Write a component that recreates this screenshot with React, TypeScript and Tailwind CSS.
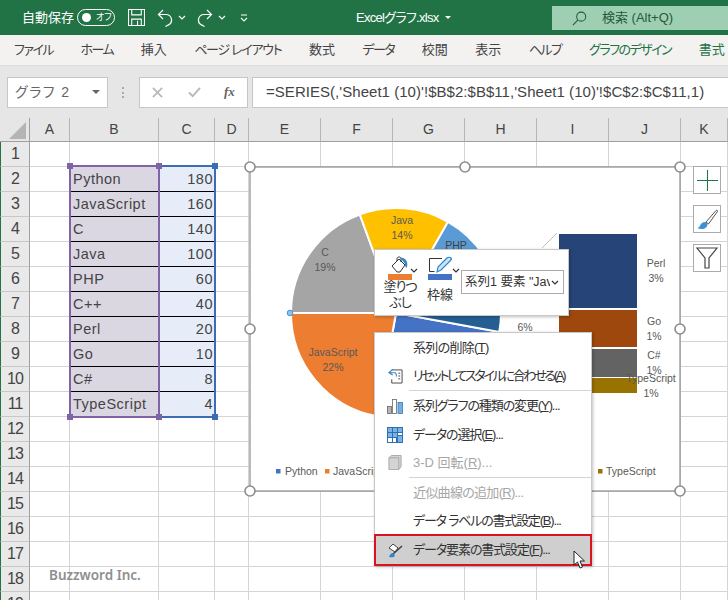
const uiFont = "font-['Liberation_Sans','Noto_Sans_CJK_JP',sans-serif]";

const tabs = [
  { label: "ファイル", cls: "text-[#444] tracking-[-1.5px]" },
  { label: "ホーム", cls: "text-[#444] tracking-[-1.5px]" },
  { label: "挿入", cls: "text-[#444]" },
  { label: "ページ レイアウト", cls: "text-[#444] tracking-[-1.3px]" },
  { label: "数式", cls: "text-[#444]" },
  { label: "データ", cls: "text-[#444] tracking-[-1.5px]" },
  { label: "校閲", cls: "text-[#444]" },
  { label: "表示", cls: "text-[#444]" },
  { label: "ヘルプ", cls: "text-[#444] tracking-[-1.5px]" },
  { label: "グラフのデザイン", cls: "text-[#217346] tracking-[-1.5px]" },
  { label: "書式", cls: "text-[#217346]" },
];

const gridCols = "grid-cols-[30px_40px_89px_56px_34px_72px_72px_72px_72px_72px_72px_47px]";
const columns = ["A", "B", "C", "D", "E", "F", "G", "H", "I", "J", "K"];

const data: [string, number][] = [
  ["Python", 180],
  ["JavaScript", 160],
  ["C", 140],
  ["Java", 100],
  ["PHP", 60],
  ["C++", 40],
  ["Perl", 20],
  ["Go", 10],
  ["C#", 8],
  ["TypeScript", 4],
];

const cx = 396;
const cy = 313;
const r = 105;

const slices = [
  { from: 100.4, to: 190.2, fill: "#4472c4" },
  { from: 190.2, to: 270, fill: "#ed7d31" },
  { from: 270, to: 339.8, fill: "#a5a5a5" },
  { from: 339.8, to: 389.7, fill: "#ffc000" },
  { from: 389.7, to: 419.6, fill: "#5b9bd5" },
  { from: 419.6, to: 439.5, fill: "#70ad47" },
  { from: 439.5, to: 460.4, fill: "#255e91" },
];

const slicePath = (from: number, to: number) => {
  const a = (from * Math.PI) / 180;
  const b = (to * Math.PI) / 180;
  const x1 = cx + r * Math.sin(a);
  const y1 = cy - r * Math.cos(a);
  const x2 = cx + r * Math.sin(b);
  const y2 = cy - r * Math.cos(b);
  return `M${cx} ${cy}L${x1} ${y1}A${r} ${r} 0 ${to - from > 180 ? 1 : 0} 1 ${x2} ${y2}Z`;
};

const labels: [string | null, string, number, number][] = [
  ["Java", "14%", 402, 224],
  ["C", "19%", 325, 256],
  ["JavaScript", "22%", 333, 356],
  ["Perl", "3%", 656, 267],
  ["Go", "1%", 654, 325],
  ["C#", "1%", 654, 359],
  ["TypeScript", "1%", 651, 382],
  [null, "6%", 525, 331],
];

const handles: [number, number][] = [
  [250, 167],
  [465, 167],
  [680, 167],
  [250, 329],
  [680, 329],
  [250, 491],
  [465, 491],
  [680, 491],
];

const Chevron = ({ className = "" }: { className?: string }) => (
  <svg viewBox="0 0 8 5" className={`w-[8px] h-[5px] ${className}`} fill="none" stroke="currentColor" strokeWidth="1.2">
    <path d="M1 1l3 3 3-3" />
  </svg>
);

const TitleBar = () => (
  <div className="h-[35px] bg-[#217346] flex items-center text-white relative">
    <span className="ml-[22px] text-[13px] w-[49px] whitespace-nowrap [font-feature-settings:'palt']">自動保存</span>
    <div className="ml-[6px] w-[38px] h-[17px] rounded-full border border-white flex items-center pl-[4px] gap-[5px]">
      <span className="w-[9px] h-[9px] rounded-full bg-white" />
      <span className="text-[9px] leading-none [font-feature-settings:'palt']">オフ</span>
    </div>
    <svg viewBox="0 0 16 16" className="ml-[13px] w-[17px] h-[17px]" fill="none" stroke="white" strokeWidth="1">
      <path d="M.5.5h15v15H.5zM3.500.5v5h9v-5M3.500 15.500v-6h9v6M9 11v4" />
    </svg>
    <svg viewBox="0 0 16 18" className="ml-[12px] w-[16px] h-[18px]" fill="none" stroke="white" strokeWidth="1.2">
      <path d="M6 1L1.500 5.500 6 10M1.500 5.500H9a5.500 5.500 0 0 1 2.500 10.400l-3 1.600" />
    </svg>
    <Chevron className="ml-[5px]" />
    <svg viewBox="0 0 16 18" className="ml-[11px] w-[16px] h-[18px]" fill="none" stroke="white" strokeWidth="1.2">
      <path d="M10 1l4.500 4.500L10 10M14.500 5.500H7a5.500 5.500 0 0 0-2.500 10.400l3 1.600" />
    </svg>
    <Chevron className="ml-[5px]" />
    <svg viewBox="0 0 8 8" className="ml-[14px] w-[8px] h-[8px]" fill="none" stroke="white" strokeWidth="1.1">
      <path d="M1 1h6M1 4l3 3 3-3" />
    </svg>
    <div className="ml-[108px] w-[89px] text-[13px] tracking-[-0.7px] whitespace-nowrap [font-feature-settings:'palt']">
      Excelグラフ.xlsx
    </div>
    <span className="w-0 h-0 border-x-[3px] border-x-transparent border-t-[3px] border-t-white" />
    <div className="ml-auto w-[176px] h-[24px] mt-[1px] bg-[#9fcfb2] flex items-center text-[#1e5c3a]">
      <svg viewBox="0 0 16 16" className="ml-[20px] w-[15px] h-[15px]" fill="none" stroke="#1e5c3a" strokeWidth="1.1">
        <circle cx="9.800" cy="6" r="4.800" />
        <path d="M6.300 9.500L1 15" />
      </svg>
      <span className="ml-[15px] text-[13px] whitespace-nowrap">検索 (Alt+Q)</span>
    </div>
  </div>
);

const TabBar = () => (
  <div className="h-[30px] bg-[#f3f2f1] flex items-center pl-[14px] gap-[27.5px] text-[13px] whitespace-nowrap [font-feature-settings:'palt']">
    {tabs.map((t) => (
      <span key={t.label} className={t.cls}>
        {t.label}
      </span>
    ))}
  </div>
);

const FormulaBar = () => (
  <div className="h-[53px] bg-[#e6e6e6] flex items-center pl-[7px] border-t border-[#dcdcdc]">
    <div className="w-[101px] h-[31px] bg-white border border-[#c6c6c6] flex items-center pl-[7px] pr-[7px] text-[14px] text-[#666] [font-feature-settings:'palt']">
      <span className="tracking-[1.5px]">グラフ 2</span>
      <span className="ml-auto w-0 h-0 border-x-[4px] border-x-transparent border-t-[4px] border-t-[#666]" />
    </div>
    <span className="ml-[14px] w-[2px] h-[11px] border-l-2 border-dotted border-[#aaa]" />
    <div className="ml-[15px] w-[109px] h-[31px] bg-white border border-[#c6c6c6] flex items-center relative text-[#b8b8b8]">
      <svg viewBox="0 0 12 12" className="ml-[12px] w-[11px] h-[11px]" fill="none" stroke="currentColor" strokeWidth="1.8">
        <path d="M1 1l10 10M11 1L1 11" />
      </svg>
      <svg viewBox="0 0 14 12" className="ml-[25px] w-[13px] h-[11px]" fill="none" stroke="currentColor" strokeWidth="2">
        <path d="M1 6l4 4 8-9" />
      </svg>
      <span className="ml-[23px] text-[13px] italic font-bold text-[#666] font-['Liberation_Serif',serif]">fx</span>
    </div>
    <div className="ml-[4px] flex-1 h-[31px] bg-white border-y border-l border-[#c6c6c6] flex items-center pl-[13px] text-[15px] tracking-[0.04px] text-[#444] whitespace-nowrap overflow-hidden">
      =SERIES(,'Sheet1 (10)'!$B$2:$B$11,'Sheet1 (10)'!$C$2:$C$11,1)
    </div>
  </div>
);

const Sheet = () => {
  const rows = Array.from({ length: 19 }, (_, i) => i + 1);
  return (
    <div className={`grid ${gridCols} grid-rows-[24px] auto-rows-[25px] bg-white text-[#444]`}>
      <div className="bg-[#e6e6e6] border-r border-b border-[#9f9f9f] relative">
        <span className="absolute right-[3px] bottom-[2px] w-0 h-0 border-l-[17px] border-l-transparent border-b-[17px] border-b-[#b4b4b4]" />
      </div>
      {columns.map((c) => (
        <div key={c} className="bg-[#e6e6e6] border-r border-b border-r-[#b5b5b5] border-b-[#9f9f9f] flex items-center justify-center text-[14px]">
          {c}
        </div>
      ))}
      {rows.map((n) => {
        const d = data[n - 2];
        return (
          <div key={n} className="contents">
            <div className="bg-[#e9e9e9] border-r border-b border-r-[#9f9f9f] border-b-[#c8c8c8] border-l border-l-[#217346] flex items-center justify-center text-[16px] tracking-[-1px]">
              {n}
            </div>
            <div className="border-r border-b border-[#d4d4d4]" />
            {d ? (
              <>
                <div className="bg-[#dbd7e2] border-b border-b-black flex items-center pl-[3px] pt-[2px] text-[14.5px] tracking-[0.5px] whitespace-nowrap">
                  {d[0]}
                </div>
                <div className="bg-[#e6edf8] border-b border-b-black flex items-center justify-end pr-[2px] pt-[2px] text-[14.5px] tracking-[0.5px]">
                  {d[1]}
                </div>
              </>
            ) : (
              <>
                <div className="border-r border-b border-[#d4d4d4]" />
                <div className="border-r border-b border-[#d4d4d4]" />
              </>
            )}
            {columns.slice(3).map((c) => (
              <div key={c} className="border-r border-b border-[#d4d4d4]" />
            ))}
          </div>
        );
      })}
    </div>
  );
};

const Selection = () => (
  <>
    <div className="absolute left-[69px] top-[165px] w-[91px] h-[253px] border-2 border-[#8062a6]" />
    <div className="absolute left-[159px] top-[165px] w-[57px] h-[253px] border-y-2 border-r-2 border-[#3b6cb4]" />
    {[69.5, 158.5].flatMap((x) =>
      [166, 416.5].map((y) => (
        <span
          key={`${x}-${y}`}
          className="absolute w-[6px] h-[6px] -ml-[3px] -mt-[3px] bg-[#8062a6]"
          style={{ left: x, top: y }}
        />
      ))
    )}
    {[166, 416.5].map((y) => (
      <span
        key={y}
        className="absolute w-[6px] h-[6px] -ml-[3px] -mt-[3px] bg-[#3b6cb4]"
        style={{ left: 214.5, top: y }}
      />
    ))}
  </>
);

const Chart = () => (
  <svg
    viewBox="240 157 451 345"
    className="absolute left-[240px] top-[157px] w-[451px] h-[345px] font-['Liberation_Sans',sans-serif]"
  >
    <rect x="250" y="167" width="430" height="324" fill="white" stroke="#8c8c8c" strokeWidth="1.2" />
    {slices.map((s) => (
      <path key={s.from} d={slicePath(s.from, s.to)} fill={s.fill} stroke="white" strokeWidth="2" />
    ))}
    <path d="M542 248L557 233" stroke="#bfbfbf" />
    <rect x="559" y="234" width="78" height="74" fill="#264478" />
    <rect x="559" y="310" width="78" height="37" fill="#9e480e" />
    <rect x="559" y="349" width="78" height="28" fill="#636363" />
    <rect x="559" y="378" width="78" height="15" fill="#997300" />
    <text x="456" y="249" textAnchor="middle" fontSize="10.5" fill="#404040">PHP</text>
    {labels.map(([name, pct, x, y]) => (
      <g key={pct + x} fontSize="10.5" fill="#595959" textAnchor="middle">
        {name && <text x={x} y={y}>{name}</text>}
        <text x={x} y={name ? y + 15 : y}>{pct}</text>
      </g>
    ))}
    <g fontSize="10.5" fill="#595959">
      <rect x="276" y="469" width="4.5" height="4.5" fill="#4472c4" />
      <text x="285" y="475">Python</text>
      <rect x="325" y="469" width="4.5" height="4.5" fill="#ed7d31" />
      <text x="333" y="475">JavaScript</text>
      <rect x="598" y="469" width="4.5" height="4.5" fill="#997300" />
      <text x="606" y="475">TypeScript</text>
    </g>
    {handles.map(([x, y]) => (
      <circle key={`${x}-${y}`} cx={x} cy={y} r="5" fill="white" stroke="#8c8c8c" strokeWidth="1.6" />
    ))}
    <circle cx="290" cy="313" r="2.8" fill="#8fc4ec" stroke="#4a90c8" />
  </svg>
);

const ChartButtons = () => (
  <div className="absolute left-[693px] top-[166px] flex flex-col gap-[11px]">
    <div className="w-[28px] h-[28px] bg-white border border-[#ababab] flex items-center justify-center">
      <svg viewBox="0 0 20 20" className="w-[21px] h-[21px]" stroke="#217346" strokeWidth="1">
        <path d="M10 0v20M0 10h20" />
      </svg>
    </div>
    <div className="w-[28px] h-[28px] bg-white border border-[#ababab] flex items-center justify-center">
      <svg viewBox="0 0 24 24" className="w-[24px] h-[24px]">
        <path d="M11 15L21 3.500c1-.8 2 .2 1.300 1.200L13.500 17z" fill="white" stroke="#555" strokeWidth="1" />
        <path d="M2 21c3 0 2.500-3 5-5 2-1.500 4-1.200 5 0 1 1.500.5 3-1 4.500-2 2-6 2-9 .5z" fill="#3f8fd2" />
      </svg>
    </div>
    <div className="w-[28px] h-[28px] bg-white border border-[#ababab] flex items-center justify-center">
      <svg viewBox="0 0 24 24" className="w-[24px] h-[24px]" fill="none" stroke="#444" strokeWidth="1.2">
        <path d="M2 2h20l-8 10v10h-4V12z" />
      </svg>
    </div>
  </div>
);

const MiniToolbar = () => (
  <div className={`absolute left-[374px] top-[249px] w-[195px] h-[67px] bg-white border border-[#c8c8c8] shadow-[1px_1px_3px_rgba(0,0,0,0.25)] flex text-[#333] text-[13px] leading-[16px] ${uiFont}`}>
    <div className="ml-[12px] w-[26px] flex flex-col items-center pt-[6px] shrink-0">
      <svg viewBox="0 0 18 18" className="w-[18px] h-[18px] shrink-0">
        <path d="M1 10L8 3l6 6-5 7H6z" fill="white" stroke="#333" />
        <path d="M6 5V2.500c0-2 4-2 4 0V6" fill="none" stroke="#333" />
        <path d="M9 2c3-1 6 1 7 4 .5 2 .5 4-.5 6-1.500-1-1.500-3-1.500-4-1-2-3-4-5-6z" fill="#2f86c8" />
      </svg>
      <span className="w-[24px] h-[6px] bg-[#ed7d31] shrink-0" />
      <span className="-mt-px text-center whitespace-nowrap tracking-[-1px] [font-feature-settings:'palt']">塗りつ<br />ぶし</span>
    </div>
    <Chevron className="mt-[18px] ml-[-3px] shrink-0" />
    <div className="ml-[9px] w-[26px] flex flex-col items-center pt-[6px] shrink-0">
      <svg viewBox="0 0 24 18" className="w-[24px] h-[18px] shrink-0" fill="none">
        <path d="M14 2.500H1.500v13h5" stroke="#333" />
        <path d="M9 16l1-5L19 2c1-1 3-1 4 0s0 2-1 3l-9 9z" fill="#cfe5f7" stroke="#2f86c8" strokeWidth="1.2" />
      </svg>
      <span className="w-[24px] h-[6px] bg-[#4472c4] shrink-0" />
      <span className="mt-[7px] whitespace-nowrap">枠線</span>
    </div>
    <Chevron className="mt-[18px] ml-[-1px] shrink-0" />
    <div className="ml-[1px] mt-[20px] w-[103px] h-[24px] border border-[#ababab] flex items-center pl-[3px] pr-[4px] shrink-0 text-[12.5px]">
      <span className="w-[85px] overflow-hidden whitespace-nowrap">系列1 要素 "Java"</span>
      <Chevron className="ml-auto" />
    </div>
  </div>
);

const menuItems = [
  { label: "系列の削除(", key: "T", tail: ")", h: "h-[29px]", t: "tracking-[-0.7px]" },
  { label: "リセットしてスタイルに合わせる(", key: "A", tail: ")", h: "h-[28px]", icon: "reset", t: "tracking-[-2.3px]" },
  { sep: true },
  { label: "系列グラフの種類の変更(", key: "Y", tail: ")...", h: "h-[30px]", icon: "type", t: "tracking-[-1.1px]" },
  { label: "データの選択(", key: "E", tail: ")...", h: "h-[27px]", icon: "data", t: "tracking-[-1.1px]" },
  { label: "3-D 回転(", key: "R", tail: ")...", h: "h-[29px]", icon: "cube", off: true, t: "" },
  { sep: true },
  { label: "近似曲線の追加(", key: "R", tail: ")...", h: "h-[29px]", off: true, t: "tracking-[-0.7px]" },
  { label: "データ ラベルの書式設定(", key: "B", tail: ")...", h: "h-[27px]", t: "tracking-[-1.2px]" },
];

const MenuIcon = ({ name }: { name?: string }) => {
  if (name === "reset")
    return (
      <svg viewBox="0 0 16 16" className="w-[15px] h-[16px]" fill="none">
        <path d="M4 1.500h11v14H4v-4" stroke="#444" />
        <path d="M5 1L1 4.500 5 7M1 4.500h6c2 0 2 3 2 4" stroke="#2f86c8" strokeWidth="1.2" />
        <path d="M11 5h2M11 8h2M11 11h2" stroke="#444" />
      </svg>
    );
  if (name === "type")
    return (
      <svg viewBox="0 0 16 16" className="w-[16px] h-[16px]">
        <rect x=".5" y="8.500" width="4" height="7" fill="#b5b5b5" stroke="#666" strokeWidth=".8" />
        <rect x="5.500" y="1.500" width="4" height="14" fill="white" stroke="#666" strokeWidth=".8" />
        <rect x="11" y="4.500" width="4.500" height="11" fill="#77aee0" stroke="#2f7ec2" strokeWidth=".8" />
      </svg>
    );
  if (name === "data")
    return (
      <svg viewBox="0 0 16 16" className="w-[16px] h-[16px]">
        <rect x="0" y="0" width="16" height="16" fill="#2b6fb5" />
        <path d="M1 1h4v4H1zM6 1h4v4H6zM11 1h4v4h-4zM1 6h4v4H1zM6 6h4v4H6z" fill="#7fb2e4" />
        <path d="M1 11h4v4H1zM6 11h3v4H6zM11 6h4v2h-4z" fill="white" />
        <rect x="11" y="9" width="4" height="6" fill="#7fb2e4" />
      </svg>
    );
  if (name === "cube")
    return (
      <svg viewBox="0 0 14 16" className="w-[14px] h-[15px]">
        <path d="M.5 3L3 .5h10.500v12L11 15.500H.5z" fill="#d4d4d4" stroke="#a8a8a8" />
        <path d="M.5 3H11v12.500" fill="none" stroke="#a8a8a8" />
      </svg>
    );
  return null;
};

const ContextMenu = () => (
  <div className={`absolute left-[374px] top-[332px] w-[218px] h-[234px] bg-white border border-[#c8c8c8] shadow-[1px_1px_3px_rgba(0,0,0,0.25)] flex flex-col text-[13px] text-[#333] [font-feature-settings:'palt'] whitespace-nowrap ${uiFont}`}>
    {menuItems.map((m, i) =>
      m.sep ? (
        <div key={i} className="ml-[34px] h-px bg-[#d4d4d4] shrink-0" />
      ) : (
        <div key={i} className={`${m.h} flex items-center shrink-0 ${m.off ? "text-[#a6a6a6]" : ""}`}>
          <div className="w-[38px] shrink-0 flex justify-center pl-[2px]">
            <MenuIcon name={m.icon} />
          </div>
          <span className={m.t}>
            {m.label}
            <span className="underline">{m.key}</span>
            {m.tail}
          </span>
        </div>
      )
    )}
    <div className="mt-auto -ml-px -mr-px h-[32px] mb-[1px] bg-[#cfcfcf] border-2 border-[#d9141e] flex items-center shrink-0">
      <div className="w-[37px] shrink-0 flex justify-center pl-[2px]">
        <svg viewBox="0 0 16 16" className="w-[16px] h-[16px]">
          <path d="M1 6l4-4 5 4-3 4z" fill="white" stroke="#444" />
          <path d="M5 12L14 4" stroke="#444" strokeWidth="1.6" />
          <path d="M1 15c1-3 3-5 5-3s0 4-5 3z" fill="#2f86c8" />
        </svg>
      </div>
      <span className="tracking-[-1.1px]">データ要素の書式設定(<span className="underline">F</span>)...</span>
    </div>
  </div>
);

const Cursor = () => (
  <svg viewBox="0 0 13 19" className="absolute left-[573px] top-[550px] w-[13px] h-[19px]">
    <path d="M1 1v14l3.500-3 2.500 6 2.500-1-2.500-6h4.500z" fill="white" stroke="#222" strokeWidth="1" />
  </svg>
);

export default function App() {
  return (
    <div className={`relative w-[728px] h-[600px] overflow-hidden bg-white ${uiFont}`}>
      <TitleBar />
      <TabBar />
      <FormulaBar />
      <Sheet />
      <Selection />
      <Chart />
      <ChartButtons />
      <MiniToolbar />
      <ContextMenu />
      <Cursor />
      <span className="absolute left-[49px] top-[565px] text-[13.5px] font-semibold text-[#8e8e8e] font-['Noto_Sans',sans-serif]">Buzzword Inc.</span>
    </div>
  );
}
